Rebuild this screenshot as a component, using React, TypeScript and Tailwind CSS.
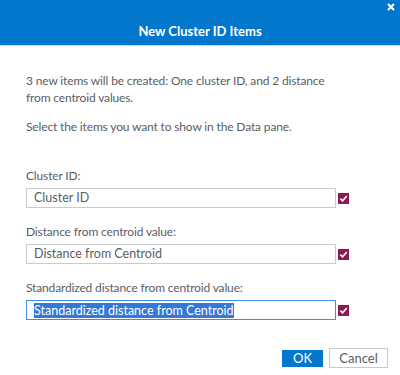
import React from 'react';

const Check = () => (
  <span className="flex h-[11px] w-[11px] shrink-0 items-center justify-center bg-[#8a1a52]">
    <svg width="9" height="9" viewBox="0 0 10 10">
      <path d="M1.5 5.2 L4 7.6 L8.6 2.2" fill="none" stroke="#fff" strokeWidth="1.9" />
    </svg>
  </span>
);

const Field = ({ label, value, active }: { label: string; value: string; active?: boolean }) => (
  <div className="flex flex-col">
    <div className="h-[17px] leading-[17px]">{label}</div>
    <div className="mt-[4px] flex items-center gap-[2px]">
      <div
        className={
          active
            ? 'flex h-[20px] w-[310px] items-center border border-[#3a8ee6] px-[7px] text-[12.5px] tracking-normal'
            : 'flex h-[20px] w-[310px] items-center border border-[#c8ccd2] px-[7px] text-[12.5px] tracking-normal'
        }
      >
        {active ? <span className="bg-[#3478d8] text-white leading-[15px]">{value}</span> : <span>{value}</span>}
      </div>
      <Check />
    </div>
  </div>
);

export default function App() {
  return (
    <div
      className="h-[375px] w-[400px] bg-white text-[12px] tracking-[-0.15px] text-[#5a5e63]"
      style={{ fontFamily: 'Lato, "Open Sans", sans-serif' }}
    >
      <div className="relative flex h-[46px] items-end justify-center border-b border-[#bcd8f0] bg-[#0277cc] pb-[4px] tracking-normal">
        <span className="text-[13px] font-bold text-white">New Cluster ID Items</span>
        <svg className="absolute right-[5px] top-[3px]" width="8" height="8" viewBox="0 0 8 8">
          <path d="M1 1 L7 7 M7 1 L1 7" stroke="#fff" strokeWidth="2" />
        </svg>
      </div>
      <div className="pl-[26px] pt-[26px]">
        <p className="w-[315px] leading-[17px]">
          3 new items will be created: One cluster ID, and 2 distance from centroid values.
        </p>
        <p className="mt-[12px] leading-[17px]">Select the items you want to show in the Data pane.</p>
        <div className="mt-[32px] flex flex-col gap-[15px]">
          <Field label="Cluster ID:" value="Cluster ID" />
          <Field label="Distance from centroid value:" value="Distance from Centroid" />
          <Field label="Standardized distance from centroid value:" value="Standardized distance from Centroid" active />
        </div>
      </div>
      <div className="mt-[28px] flex justify-end gap-[6px] pr-[12px] tracking-normal">
        <button className="mt-[2px] h-[17px] w-[41px] bg-[#0277cc] text-[13px] leading-[17px] text-white">OK</button>
        <button className="h-[20px] w-[59px] border border-[#c8ccd2] bg-white text-[13px] leading-[18px] text-[#5a5e63]">
          Cancel
        </button>
      </div>
    </div>
  );
}
